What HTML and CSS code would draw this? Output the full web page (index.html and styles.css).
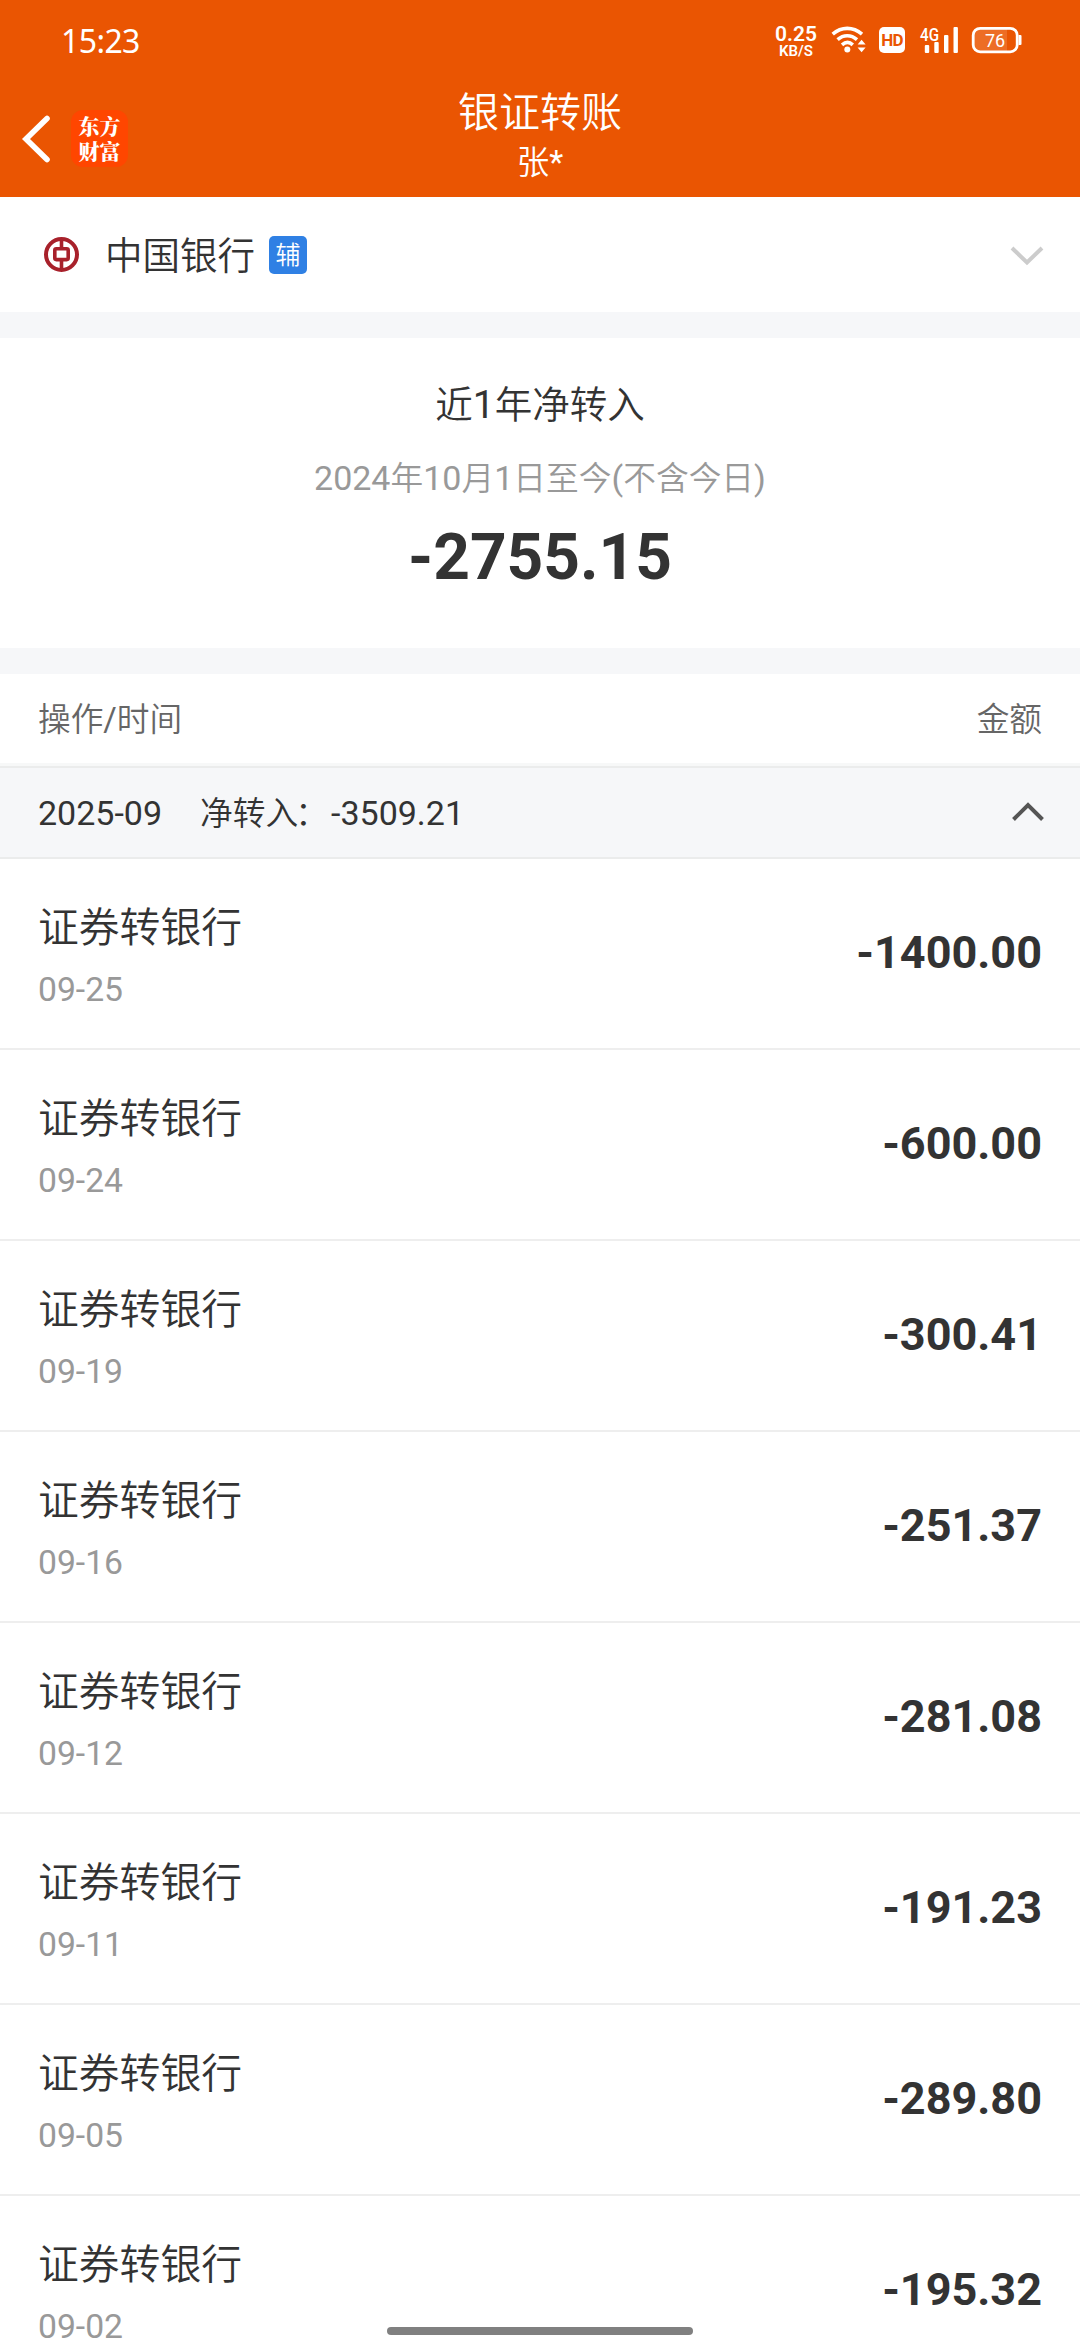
FILE: index.html
```html
<!DOCTYPE html>
<html lang="zh-CN">
<head>
<meta charset="utf-8">
<title>银证转账</title>
<link rel="stylesheet" href="styles.css">
</head>
<body>
<div class="screen">
  <header class="header">
    <div class="status">
      <span class="clock">15:23</span>
      <div class="indicators">
        <div class="speed"><span class="speed-value">0.25</span><span class="speed-unit">KB/S</span></div>
        <svg class="wifi" width="36" height="28" viewBox="0 0 36 28" fill="none" stroke="#fff" stroke-width="3.6">
          <path d="M1.700 8.200C10.500 .4 22 .4 31 8.200"/>
          <path d="M6.600 13.600C12.500 8.400 20 8.400 26 13.600"/>
          <path d="M11 18.800C14.500 15.800 18.500 15.800 21.800 18.800"/>
          <circle cx="16.300" cy="23.600" r="3" fill="#fff" stroke="none"/>
          <path d="M26.600 18.600L30.600 13.800L34.600 18.600ZM26.600 21.400L30.600 26.200L34.600 21.400Z" fill="#fff" stroke="none"/>
        </svg>
        <span class="hd">HD</span>
        <svg class="signal" width="40" height="28" viewBox="0 0 40 28" fill="#fff">
          <text x="0" y="14.500" font-size="17.500" textLength="19" lengthAdjust="spacingAndGlyphs">4G</text>
          <rect x="4.800" y="19" width="4.400" height="8" rx="1"/>
          <rect x="14.300" y="16" width="4.400" height="11" rx="1"/>
          <rect x="24" y="9" width="4.400" height="18" rx="1"/>
          <rect x="33.500" y="1" width="4.400" height="26" rx="1"/>
        </svg>
        <svg class="battery" width="52" height="28" viewBox="0 0 52 28">
          <path d="M7 3H36V25H7A4 4 0 0 1 3 21V7A4 4 0 0 1 7 3Z" fill="#fff" fill-opacity=".14"/>
          <rect x="2.200" y="2.300" width="44" height="23.600" rx="7" fill="none" stroke="#fff" stroke-width="2.800"/>
          <path d="M47.600 9H49.500Q50.500 9 50.500 10V18Q50.500 19 49.500 19H47.600Z" fill="#fff"/>
          <text x="24" y="20.500" font-size="18" text-anchor="middle" fill="#fff">76</text>
        </svg>
      </div>
    </div>
    <div class="navbar">
      <div class="nav-left">
        <svg width="30" height="50" viewBox="0 0 30 50" fill="none" stroke="#fff" stroke-width="5.600" stroke-linecap="round"><path d="M26 4.500L5 25L26 45.500"/></svg>
        <span class="app-logo">东方<br>财富</span>
      </div>
      <div class="nav-title">
        <h1>银证转账</h1>
        <p>张*</p>
      </div>
    </div>
  </header>

  <section class="bank">
    <svg width="36" height="36" viewBox="0 0 36 36" fill="none" stroke="#a8212b">
      <circle cx="18.500" cy="17.500" r="15.500" stroke-width="4"/>
      <rect x="11.800" y="11.800" width="13.400" height="10.800" rx="1.500" stroke-width="3.600"/>
      <path d="M18.500 3V12M18.500 23V33" stroke-width="3.600"/>
    </svg>
    <span class="bank-name">中国银行</span>
    <span class="badge">辅</span>
    <svg class="chevron" width="36" height="24" viewBox="0 0 36 24" fill="none" stroke="#ccc" stroke-width="4"><path d="M4 5L19 19.500L34 5"/></svg>
  </section>

  <section class="summary">
    <h2><span class="han">近</span>1<span class="han">年净转入</span></h2>
    <p class="range">2024<span class="han">年</span>10<span class="han">月</span>1<span class="han">日至今</span>(<span class="han">不含今日</span>)</p>
    <p class="total">-2755.15</p>
  </section>

  <div class="table-head"><span>操作/时间</span><span>金额</span></div>
  <div class="month">
    <span>2025-09</span>
    <span class="net"><span class="han">净转入<span class="colon">：</span></span>-3509.21</span>
    <svg class="chevron" width="36" height="24" viewBox="0 0 36 24" fill="none" stroke="#555" stroke-width="4"><path d="M4.500 18.500L19 4L33.500 18.500"/></svg>
  </div>

  <ul class="list">
    <li><div><h3>证券转银行</h3><time>09-25</time></div><b>-1400.00</b></li>
    <li><div><h3>证券转银行</h3><time>09-24</time></div><b>-600.00</b></li>
    <li><div><h3>证券转银行</h3><time>09-19</time></div><b>-300.41</b></li>
    <li><div><h3>证券转银行</h3><time>09-16</time></div><b>-251.37</b></li>
    <li><div><h3>证券转银行</h3><time>09-12</time></div><b>-281.08</b></li>
    <li><div><h3>证券转银行</h3><time>09-11</time></div><b>-191.23</b></li>
    <li><div><h3>证券转银行</h3><time>09-05</time></div><b>-289.80</b></li>
    <li><div><h3>证券转银行</h3><time>09-02</time></div><b>-195.32</b></li>
  </ul>
  <div class="home-bar"></div>
</div>
</body>
</html>
```
FILE: styles.css
```css
* { box-sizing: border-box; margin: 0; padding: 0; }

body {
  font-family: Roboto, "Noto Sans CJK SC DemiLight", "Noto Sans CJK SC", sans-serif;
  color: #333;
  background: #fff;
}

h1, h2, h3 { font-weight: 400; }
svg { display: block; flex: none; overflow: visible; }
.han { font-size: .963em; }

.screen {
  position: relative;
  width: 1080px;
  height: 2340px;
  overflow: hidden;
}

/* Header */
.header { height: 197px; background: #ea5502; color: #fff; }

.status {
  display: flex;
  justify-content: space-between;
  height: 80px;
  padding: 0 57px 0 61px;
}
.clock {
  font: 400 32px/81px "Noto Sans", sans-serif;
  letter-spacing: -.6px;
}
.indicators { display: flex; align-items: flex-start; padding-top: 26px; }
.speed {
  display: flex;
  flex-direction: column;
  align-items: center;
  width: 42px;
  font-weight: 600;
}
.speed-value { font-size: 21px; line-height: 17px; }
.speed-unit { font-size: 15px; line-height: 16px; }
.wifi { margin-left: 14px; }
.hd {
  width: 26px;
  height: 26px;
  margin: 1px 0 0 12px;
  border-radius: 5px;
  background: #fff;
  color: #ea5502;
  font-size: 17px;
  font-weight: 700;
  line-height: 27px;
  letter-spacing: -.7px;
  text-align: center;
}
.signal { margin-left: 15px; font-weight: 500; }
.battery { margin-left: 11px; }

.navbar {
  display: grid;
  grid-template-columns: 1fr auto 1fr;
  height: 117px;
}
.nav-left { display: flex; align-items: center; gap: 20px; padding: 0 0 1px 21px; }
.nav-left svg { margin-top: 2px; }
.app-logo {
  width: 57px;
  height: 57px;
  border-radius: 12px;
  background: #ff4600;
  font-family: "Noto Serif CJK SC", "Noto Sans CJK SC", sans-serif;
  font-size: 21px;
  font-weight: 900;
  line-height: 25px;
  padding-top: 3px;
  text-align: center;
}
.nav-title { padding-top: 9px; text-align: center; }
.nav-title h1 { font-size: 41px; line-height: 48px; }
.nav-title p { margin-top: 6px; font-size: 32.500px; line-height: 40px; }

/* Bank selector */
.bank {
  display: flex;
  align-items: center;
  height: 115px;
  padding: 0 36px 0 43px;
}
.bank-name { margin: 2px 0 0 26px; font-size: 37.500px; line-height: 60px; }
.badge {
  width: 38px;
  height: 38px;
  margin-left: 14px;
  border-radius: 5px;
  background: #2f80e4;
  color: #fff;
  font-size: 25px;
  line-height: 39px;
  text-align: center;
}
.chevron { margin-left: auto; }

/* Yearly summary */
.summary {
  height: 362px;
  padding-top: 37px;
  border-top: 26px solid #f6f7f9;
  border-bottom: 26px solid #f6f7f9;
  text-align: center;
}
.summary h2 { font-size: 39px; line-height: 60px; }
.range { margin-top: 18px; font-size: 34px; line-height: 50px; color: #999; }
.total { margin-top: 17px; font-size: 64px; font-weight: 700; line-height: 74px; }

/* Records */
.table-head {
  display: flex;
  justify-content: space-between;
  height: 92px;
  padding: 0 38px;
  border-bottom: 3px solid #f7f8f8;
  color: #666;
  font-size: 32.700px;
  line-height: 93px;
}
.month {
  display: flex;
  align-items: center;
  height: 93px;
  padding: 0 35px 0 38px;
  border-top: 2px solid #ebecec;
  border-bottom: 2px solid #ebecec;
  background: #f6f7f9;
  font-size: 34px;
  line-height: 40px;
}
.month span { padding-top: 1px; }
.net { margin-left: 38px; }
.colon { margin: 0 3px 0 -3px; }

.list { list-style: none; }
.list li {
  display: flex;
  justify-content: space-between;
  height: 191px;
  padding: 0 38px;
  border-bottom: 2px solid #eee;
}
.list h3 { margin-top: 41px; font-size: 40.800px; line-height: 56px; }
.list time { display: block; margin-top: 14px; font-size: 33.700px; line-height: 40px; color: #999; }
.list b { font-size: 45px; font-weight: 700; line-height: 188px; }

/* Gesture bar floating over the list */
.home-bar {
  position: absolute;
  left: 387px;
  bottom: 5px;
  width: 306px;
  height: 8px;
  border-radius: 4px;
  background: #808080;
}
```
